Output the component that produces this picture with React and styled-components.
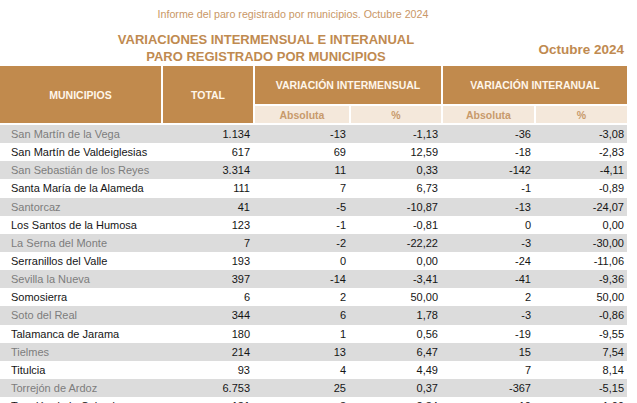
import React from 'react'
import styled, { createGlobalStyle } from 'styled-components'

const rows = [
  ['San Martín de la Vega', '1.134', '-13', '-1,13', '-36', '-3,08'],
  ['San Martín de Valdeiglesias', '617', '69', '12,59', '-18', '-2,83'],
  ['San Sebastián de los Reyes', '3.314', '11', '0,33', '-142', '-4,11'],
  ['Santa María de la Alameda', '111', '7', '6,73', '-1', '-0,89'],
  ['Santorcaz', '41', '-5', '-10,87', '-13', '-24,07'],
  ['Los Santos de la Humosa', '123', '-1', '-0,81', '0', '0,00'],
  ['La Serna del Monte', '7', '-2', '-22,22', '-3', '-30,00'],
  ['Serranillos del Valle', '193', '0', '0,00', '-24', '-11,06'],
  ['Sevilla la Nueva', '397', '-14', '-3,41', '-41', '-9,36'],
  ['Somosierra', '6', '2', '50,00', '2', '50,00'],
  ['Soto del Real', '344', '6', '1,78', '-3', '-0,86'],
  ['Talamanca de Jarama', '180', '1', '0,56', '-19', '-9,55'],
  ['Tielmes', '214', '13', '6,47', '15', '7,54'],
  ['Titulcia', '93', '4', '4,49', '7', '8,14'],
  ['Torrejón de Ardoz', '6.753', '25', '0,37', '-367', '-5,15'],
  ['Torrejón de la Calzada', '131', '3', '2,34', '-10', '-1,09'],
]

const GlobalStyle = createGlobalStyle`
  html, body {
    margin: 0;
    padding: 0;
    background: #fff;
    overflow: hidden;
  }
  body {
    font-family: "Liberation Sans", Arial, sans-serif;
  }
`

const Page = styled.div`
  width: 637px;
  height: 403px;
  overflow: hidden;
  padding-top: 8px;
  box-sizing: border-box;
`

const Subtitle = styled.div`
  width: 586px;
  text-align: center;
  font-size: 10.7px;
  line-height: 12px;
  color: #c99766;
`

const TitleBar = styled.div`
  display: flex;
  align-items: center;
  width: 627px;
  margin-top: 11px;
`

const Title = styled.h1`
  width: 532px;
  margin: 0;
  text-align: center;
  font-size: 13px;
  line-height: 17px;
  font-weight: bold;
  color: #c08a50;
`

const Month = styled.div`
  flex: 1;
  text-align: right;
  padding-right: 3px;
  padding-top: 2px;
  font-size: 13.5px;
  font-weight: bold;
  color: #c08a50;
`

const cols = '161px 90px 94px 90px 91px 91px'

const Head = styled.div`
  display: grid;
  grid-template-columns: ${cols};
  grid-template-rows: 38px 17px;
  gap: 2px;
  margin-top: 1px;
  width: 627px;
`

const HeadCell = styled.div`
  display: flex;
  align-items: center;
  justify-content: center;
  background: #c18a4d;
  color: #fff6ea;
  font-size: 10.5px;
  font-weight: bold;
  grid-row: ${(p) => (p.$tall ? '1 / 3' : 'auto')};
  grid-column: ${(p) => p.$span || 'auto'};
`

const SubCell = styled.div`
  display: flex;
  align-items: center;
  justify-content: center;
  background: #f4e8db;
  color: #c89a6b;
  font-size: 10.5px;
  font-weight: bold;
`

const Body = styled.div`
  margin-top: 2px;
  width: 627px;
`

const Row = styled.div`
  display: grid;
  grid-template-columns: ${cols};
  column-gap: 2px;
  height: 18.15px;
  align-items: center;
  font-size: 11px;
  color: #151515;
  background: ${(p) => (p.$shaded ? '#dcdcdc' : '#ffffff')};
`

const Name = styled.div`
  padding-left: 11px;
  white-space: nowrap;
  color: ${(p) => (p.$shaded ? '#7c7c7c' : '#151515')};
`

const Num = styled.div`
  text-align: right;
  padding-right: 3px;
`

export default function App() {
  return (
    <Page>
      <GlobalStyle />
      <Subtitle>Informe del paro registrado por municipios. Octubre 2024</Subtitle>
      <TitleBar>
        <Title>
          VARIACIONES INTERMENSUAL E INTERANUAL
          <br />
          PARO REGISTRADO POR MUNICIPIOS
        </Title>
        <Month>Octubre 2024</Month>
      </TitleBar>
      <Head>
        <HeadCell $tall>MUNICIPIOS</HeadCell>
        <HeadCell $tall>TOTAL</HeadCell>
        <HeadCell $span="3 / 5">VARIACIÓN INTERMENSUAL</HeadCell>
        <HeadCell $span="5 / 7">VARIACIÓN INTERANUAL</HeadCell>
        <SubCell>Absoluta</SubCell>
        <SubCell>%</SubCell>
        <SubCell>Absoluta</SubCell>
        <SubCell>%</SubCell>
      </Head>
      <Body>
        {rows.map((r, i) => (
          <Row key={r[0]} $shaded={i % 2 === 0}>
            <Name $shaded={i % 2 === 0}>{r[0]}</Name>
            {r.slice(1).map((v, j) => (
              <Num key={j}>{v}</Num>
            ))}
          </Row>
        ))}
      </Body>
    </Page>
  )
}
